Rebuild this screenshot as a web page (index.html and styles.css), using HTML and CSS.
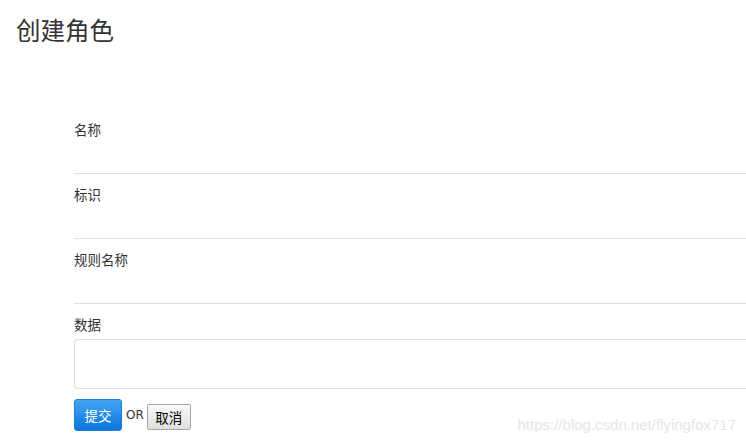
FILE: index.html
```html
<!DOCTYPE html>
<html lang="zh">
<head>
<meta charset="utf-8">
<title>创建角色</title>
<link rel="stylesheet" href="styles.css">
</head>
<body>
<div class="page">
  <h1 class="title">创建角色</h1>
  <form class="form">
    <div class="field">
      <label class="label">名称</label>
      <input class="line-input" type="text">
    </div>
    <div class="field">
      <label class="label">标识</label>
      <input class="line-input" type="text">
    </div>
    <div class="field">
      <label class="label">规则名称</label>
      <input class="line-input" type="text">
    </div>
    <div class="field field-data">
      <label class="label">数据</label>
      <textarea class="area"></textarea>
    </div>
    <div class="actions">
      <button type="button" class="btn-submit">提交</button>
      <span class="or">OR</span>
      <button type="button" class="btn-cancel">取消</button>
    </div>
  </form>
  <div class="watermark">https://blog.csdn.net/flyingfox717</div>
</div>
</body>
</html>
```

FILE: styles.css
```css
html, body {
  margin: 0;
  padding: 0;
  background: #ffffff;
}
body {
  width: 746px;
  height: 445px;
  overflow: hidden;
  font-family: "Noto Sans CJK SC", "Liberation Sans", sans-serif;
  color: #333;
}
.page {
  position: relative;
  height: 445px;
  overflow: hidden;
}
.title {
  margin: 12px 0 0 16px;
  font-size: 24.5px;
  line-height: 36px;
  font-weight: 400;
  color: #333;
}
.form {
  margin: 72px 0 0 74px;
  width: 672px;
  display: flex;
  flex-direction: column;
}
.field {
  display: flex;
  flex-direction: column;
  margin-bottom: 11px;
}
.label {
  font-size: 13.5px;
  line-height: 18px;
  height: 18px;
  color: #333;
}
.line-input {
  box-sizing: border-box;
  width: 100%;
  height: 36px;
  border: none;
  border-bottom: 1px solid #dde1e6;
  padding: 0;
  margin: 0;
  outline: none;
  background: transparent;
}
.field-data {
  margin-bottom: 0;
}
.area {
  box-sizing: border-box;
  width: 100%;
  margin-top: 6px;
  height: 50px;
  border: 1px solid #dcdfe4;
  border-right: none;
  border-radius: 4px 0 0 4px;
  resize: none;
  padding: 0;
  outline: none;
}
.actions {
  margin-top: 10px;
  display: flex;
  align-items: center;
  height: 32px;
}
.btn-submit {
  box-sizing: border-box;
  width: 48px;
  height: 32px;
  border: 1px solid #1a7fd9;
  border-radius: 3px;
  background: linear-gradient(#44a5f2, #0b75dd);
  color: #fff;
  font-family: "Noto Sans CJK SC", sans-serif;
  font-size: 13.5px;
  padding: 0;
}
.or {
  margin: 0 3px 0 4px;
  font-family: "DejaVu Sans", sans-serif;
  font-size: 12px;
  color: #333;
}
.btn-cancel {
  box-sizing: border-box;
  width: 44px;
  height: 26px;
  margin-top: 3px;
  border: 1px solid #a6a6a6;
  border-radius: 2px;
  background: linear-gradient(#fafafa, #dedede);
  color: #000;
  font-family: "Noto Sans CJK SC", sans-serif;
  font-size: 13.5px;
  padding: 0;
}
.watermark {
  position: absolute;
  right: 10px;
  top: 416px;
  font-family: "Liberation Sans", Arial, sans-serif;
  font-size: 15px;
  color: #e6e6e6;
}
```
